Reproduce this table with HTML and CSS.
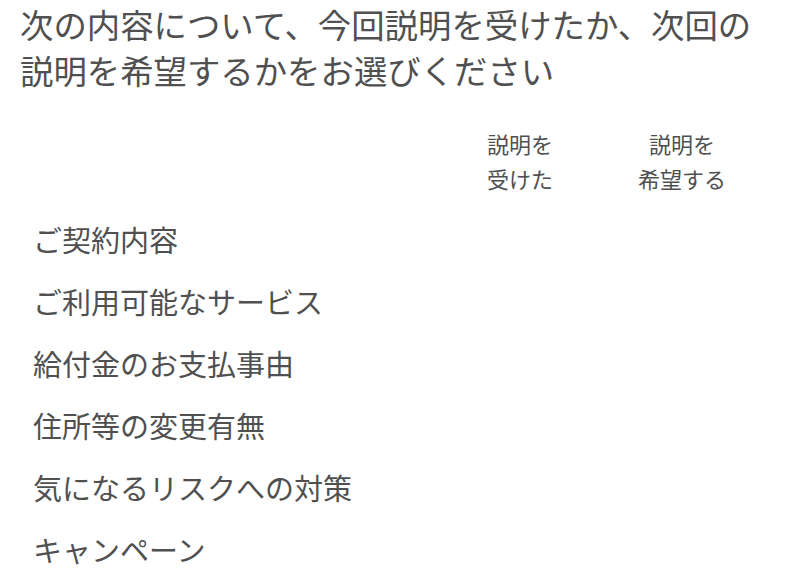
FILE: index.html
```html
<!DOCTYPE html>
<html lang="ja">
<head>
<meta charset="utf-8">
<link rel="stylesheet" href="styles.css">
</head>
<body>
<main class="page">
  <h1 class="title">
    <span class="title-line">次の内容について、今回説明を受けたか、次回の</span>
    <span class="title-line">説明を希望するかをお選びください</span>
  </h1>
  <div class="table">
    <div class="row head">
      <div class="label"></div>
      <div class="col">説明を<br>受けた</div>
      <div class="col">説明を<br>希望する</div>
    </div>
    <div class="row item"><div class="label">ご契約内容</div><div class="col"></div><div class="col"></div></div>
    <div class="row item"><div class="label">ご利用可能なサービス</div><div class="col"></div><div class="col"></div></div>
    <div class="row item"><div class="label">給付金のお支払事由</div><div class="col"></div><div class="col"></div></div>
    <div class="row item"><div class="label">住所等の変更有無</div><div class="col"></div><div class="col"></div></div>
    <div class="row item"><div class="label">気になるリスクへの対策</div><div class="col"></div><div class="col"></div></div>
    <div class="row item"><div class="label">キャンペーン</div><div class="col"></div><div class="col"></div></div>
  </div>
</main>
</body>
</html>
```

FILE: styles.css
```css
html, body {
  margin: 0;
  padding: 0;
  background: #ffffff;
}
body {
  font-family: "Noto Sans CJK JP", "Noto Sans", sans-serif;
  color: #505050;
}
.page {
  padding: 6px 23px 0 20px;
}
.title {
  margin: 0;
  display: flex;
  flex-direction: column;
  gap: 10px;
  font-size: 33.4px;
  font-weight: 400;
}
.title-line {
  display: block;
  line-height: 36px;
  white-space: nowrap;
}
.table {
  margin-top: 38px;
  padding-left: 13px;
}
.row {
  display: grid;
  grid-template-columns: 1fr 162px 162px;
  align-items: center;
}
.head {
  font-size: 22px;
  line-height: 35px;
  margin-bottom: 12px;
}
.head .col {
  text-align: center;
}
.item {
  height: 62px;
  font-size: 29px;
  line-height: 62px;
}
```
